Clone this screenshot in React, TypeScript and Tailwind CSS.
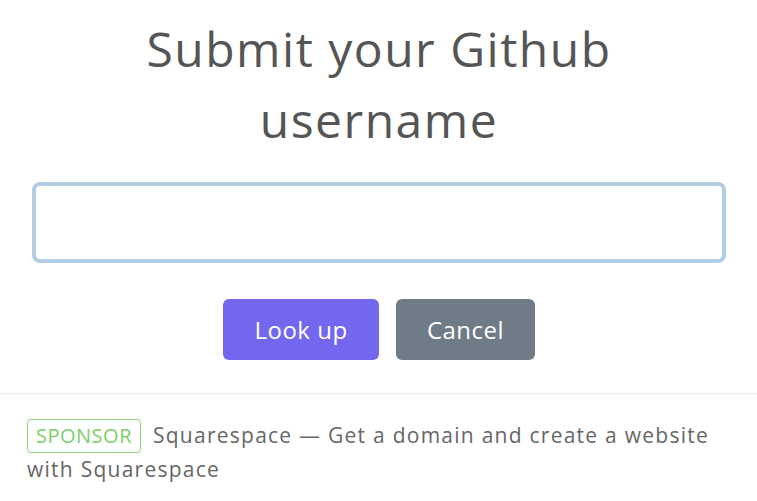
export default function App() {
  return (
    <div className="w-[757px] h-[501px] bg-white overflow-hidden font-['Open_Sans',sans-serif]">
      <div className="pl-8 pr-[31px] pt-[13px]">
        <h1 className="text-center text-[48px] leading-[71px] tracking-[1.5px] text-[#555555] font-normal">
          Submit your Github
          <br />
          username
        </h1>
        <input
          type="text"
          className="mt-[27px] block w-full h-[81px] rounded-lg border-4 border-[#b3cce6] bg-white outline-none"
        />
        <div className="mt-9 flex justify-center gap-[17px]">
          <button className="h-[61px] w-[156px] rounded-md bg-[#7467ef] text-[24px] tracking-[0.5px] text-white">
            Look up
          </button>
          <button className="h-[61px] w-[139px] rounded-md bg-[#6f7c88] text-[24px] tracking-[0.5px] text-white">
            Cancel
          </button>
        </div>
      </div>
      <div className="mt-[33px] border-t border-[#eeeeee] px-[27px] pt-[25px] text-[21px] leading-[32px] tracking-[1.25px] text-[#666666]">
        <span className="mr-3 inline-block rounded-sm border border-[#8fd67a] px-2 text-[20px] leading-[32px] tracking-[0.5px] text-[#7ccf66]">
          SPONSOR
        </span>
        Squarespace — Get a domain and create a website with Squarespace
      </div>
    </div>
  );
}
